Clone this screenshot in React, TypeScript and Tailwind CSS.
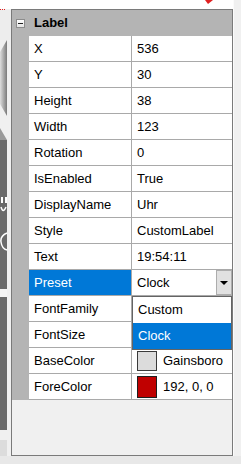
import React from "react";

type Row = { label: string; value: React.ReactNode; selected?: boolean };

function Swatch({ color }: { color: string }) {
  return <div className="w-[20px] h-[22px] shrink-0 border border-[#1e1e1e]" style={{ backgroundColor: color }} />;
}

export default function App() {
  const rows: Row[] = [
    { label: "X", value: "536" },
    { label: "Y", value: "30" },
    { label: "Height", value: "38" },
    { label: "Width", value: "123" },
    { label: "Rotation", value: "0" },
    { label: "IsEnabled", value: "True" },
    { label: "DisplayName", value: "Uhr" },
    { label: "Style", value: "CustomLabel" },
    { label: "Text", value: "19:54:11" },
    { label: "Preset", value: "Clock", selected: true },
    { label: "FontFamily", value: "" },
    { label: "FontSize", value: "" },
    {
      label: "BaseColor",
      value: (
        <span className="flex items-center gap-[6px]">
          <span className="w-[20px] h-[20px] border border-[#3a3a3a] bg-[#dcdcdc] block" />
          <span>Gainsboro</span>
        </span>
      ),
    },
    {
      label: "ForeColor",
      value: (
        <span className="flex items-center gap-[6px]">
          <Swatch color="#c00000" />
          <span>192, 0, 0</span>
        </span>
      ),
    },
  ];

  return (
    <div
      className="w-[241px] h-[464px] flex flex-col bg-[#f0f0f0] overflow-hidden text-[13px] text-black"
      style={{ fontFamily: '"Liberation Sans", Arial, sans-serif' }}
    >
      <div className="flex h-[456px]">
        {/* left strip */}
        <div className="w-[11px] shrink-0 bg-[#f0f0f0]">
          <svg width="11" height="456" viewBox="0 0 11 456">
            <defs>
              <linearGradient id="g1" x1="0" y1="0" x2="1" y2="0">
                <stop offset="0" stopColor="#dedede" />
                <stop offset="1" stopColor="#7a7a7a" />
              </linearGradient>
            </defs>
            <rect x="0" y="0" width="11" height="9" fill="#ffffff" />
            <rect x="0" y="9" width="1" height="1" fill="#e02020" />
            <rect x="2" y="9" width="1" height="1" fill="#e02020" />
            <rect x="4" y="9" width="1" height="1" fill="#e02020" />
            <rect x="0" y="10" width="11" height="30" fill="#ededed" />
            <polygon points="0,52 7,40 7,116 0,104" fill="url(#g1)" />
            <polygon points="0,128 7,140 0,140" fill="#9a9a9a" />
            <rect x="0" y="140" width="7" height="149" fill="#6a6a6a" />
            <rect x="1" y="197" width="2" height="6" fill="#ffffff" />
            <rect x="5" y="197" width="2" height="6" fill="#ffffff" />
            <path d="M1 207 Q3 214 6 207" stroke="#ffffff" strokeWidth="1.5" fill="none" />
            <path d="M7 233 Q0 236 1 242 Q2 249 7 250" stroke="#ffffff" strokeWidth="1.5" fill="none" />
            <rect x="0" y="289" width="7" height="8" fill="#f4f4f4" />
            <rect x="0" y="297" width="7" height="133" fill="#6a6a6a" />
            <rect x="0" y="440" width="7" height="16" fill="#dcdcdc" />
          </svg>
        </div>

        {/* middle */}
        <div className="w-[222px] shrink-0 flex flex-col">
          <div className="h-[9px] bg-white relative">
            <svg className="absolute left-[194px] top-0" width="10" height="4" viewBox="0 0 10 4">
              <polygon points="0,0 8,0 3,4" fill="#e02020" />
            </svg>
          </div>
          <div className="h-[447px] border border-[#7a7a7a] bg-[#f0f0f0] flex flex-col">
            {/* header */}
            <div className="h-[26px] shrink-0 bg-[#b4b4b4] flex items-center">
              <div className="w-[17px] shrink-0 flex justify-center items-center pl-[0px]">
                <div className="w-[9px] h-[9px] border border-[#8c8c8c] bg-gradient-to-b from-white to-[#e4e4e4] flex items-center justify-center">
                  <div className="w-[5px] h-[1px] bg-[#222]" />
                </div>
              </div>
              <span className="pl-[5px] font-bold">Label</span>
            </div>
            {rows.map((r) => (
              <div key={r.label} className="h-[26px] shrink-0 flex">
                <div className="w-[17px] shrink-0 bg-[#b4b4b4]" />
                <div
                  className={
                    r.selected
                      ? "w-[103px] shrink-0 border-r border-b border-[#a9a9a9] bg-[#0078d7] text-white pl-[5px] flex items-center"
                      : "w-[103px] shrink-0 border-r border-b border-[#a9a9a9] bg-white pl-[5px] flex items-center"
                  }
                >
                  {r.label}
                </div>
                <div className="flex-1 min-w-0 border-b border-[#a9a9a9] bg-white pl-[5px] flex items-center relative">
                  {r.selected ? (
                    <>
                      <span className="flex-1">{r.value}</span>
                      <div className="w-[16px] self-stretch border border-[#adadad] bg-[#e1e1e1] flex items-center justify-center">
                        <svg width="8" height="4" viewBox="0 0 8 4">
                          <polygon points="0,0 8,0 4,4" fill="#000" />
                        </svg>
                      </div>
                      <div className="absolute left-0 top-[26px] w-[100px] h-[54px] border border-[#646464] bg-white z-10 flex flex-col">
                        <div className="h-[26px] pl-[5px] flex items-center">Custom</div>
                        <div className="h-[26px] pl-[5px] flex items-center bg-[#0078d7] text-white">Clock</div>
                      </div>
                    </>
                  ) : (
                    <span className="whitespace-nowrap">{r.value}</span>
                  )}
                </div>
              </div>
            ))}
            <div className="flex-1" />
          </div>
        </div>

        {/* right strip */}
        <div className="w-[8px] shrink-0 bg-[#f0f0f0] flex">
          <div className="w-[1px] bg-[#fbfbfb]" />
        </div>
      </div>
      <div className="h-[8px] bg-[#e8e8e8]" />
    </div>
  );
}
